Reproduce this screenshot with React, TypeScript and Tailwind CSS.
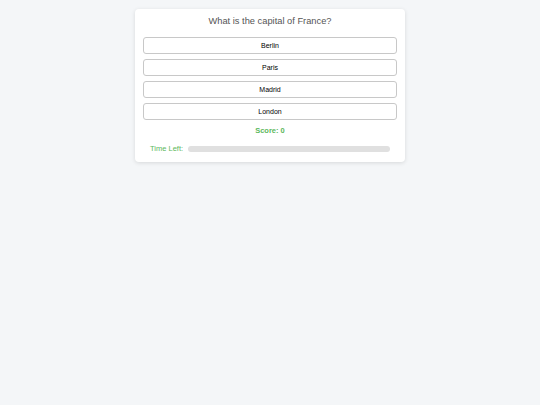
import React from 'react';

const options = ['Berlin', 'Paris', 'Madrid', 'London'];

export default function App() {
  return (
    <div className="min-h-screen bg-[#f4f6f8] pt-[9px] font-['Liberation_Sans',Arial,sans-serif]">
      <div className="mx-auto w-[270px] rounded-[4px] bg-white px-2 pt-[7px] pb-[8px] shadow-[0_1px_4px_rgba(0,0,0,0.12)]">
        <h1 className="text-center text-[9.3px] leading-[11px] text-[#555]">
          What is the capital of France?
        </h1>
        <div className="mt-[10px] flex flex-col gap-[5px]">
          {options.map(o => (
            <button
              key={o}
              className="h-[17px] w-full rounded-[3px] border border-[#c8c8c8] bg-white text-center text-[7px] leading-none text-black"
            >
              {o}
            </button>
          ))}
        </div>
        <div className="mt-[6px] text-center text-[7.5px] leading-[10px] font-bold text-[#5cb85c]">
          Score: 0
        </div>
        <div className="mt-[8px] flex items-center gap-[5px] px-[7px]">
          <span className="text-[7.5px] leading-[10px] text-[#5cb85c]">Time Left:</span>
          <div className="h-[6px] flex-1 rounded-full bg-[#e0e0e0]" />
        </div>
      </div>
    </div>
  );
}
